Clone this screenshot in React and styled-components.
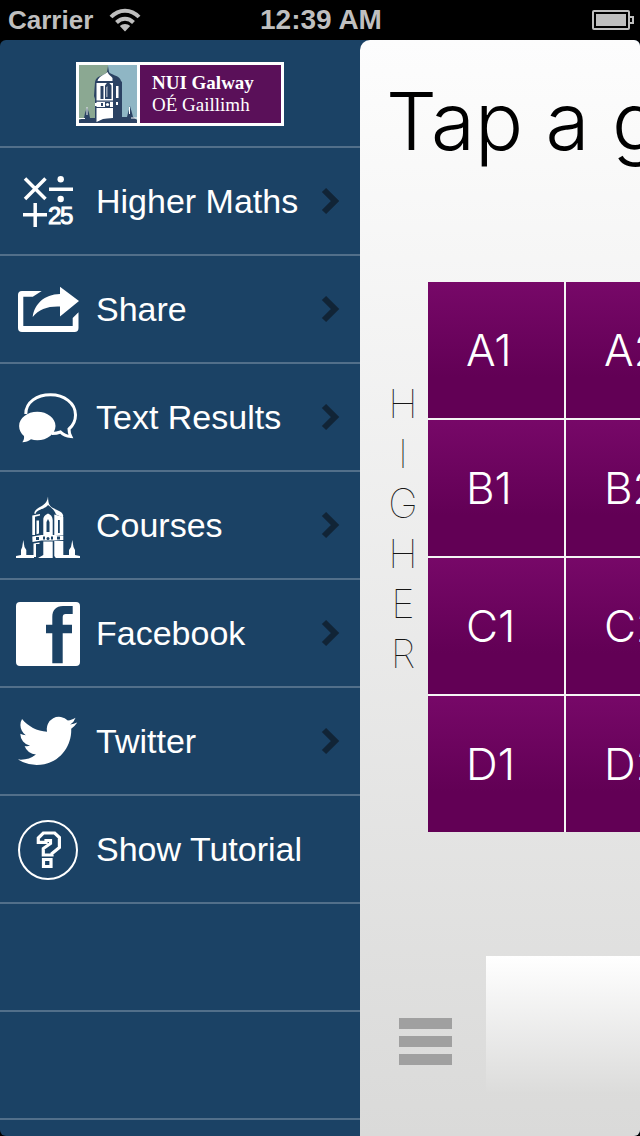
import styled, { createGlobalStyle } from "styled-components"

const grades = ["A1", "A2", "B1", "B2", "C1", "C2", "D1", "D2"]

const App = () => (
  <>
    <GlobalStyle />
    <Screen>
      <StatusBar>
        <Signal>
          Carrier
          <WifiIcon />
        </Signal>
        <Clock>12:39 AM</Clock>
        <BatteryIcon />
      </StatusBar>
      <Body>
        <Sidebar>
          <Header>
            <Logo href="#home">
              <Crest />
              <LogoText>
                <strong>NUI Galway</strong>
                <span>OÉ Gaillimh</span>
              </LogoText>
            </Logo>
          </Header>
          <Menu>
            {items.map(({ label, icon: Icon, arrow }) => (
              <MenuItem key={label}>
                <MenuLink href="#menu">
                  <Icon />
                  <Label>{label}</Label>
                  {arrow && <Chevron />}
                </MenuLink>
              </MenuItem>
            ))}
            <MenuItem />
            <MenuItem />
          </Menu>
        </Sidebar>
        <Content>
          <Title>Tap a grade</Title>
          <Board>
            <Level>
              {"HIGHER".split("").map((letter, i) => (
                <span key={i}>{letter}</span>
              ))}
            </Level>
            <Grades>
              {grades.map((grade) => (
                <Grade key={grade} type="button">
                  {grade}
                </Grade>
              ))}
            </Grades>
          </Board>
          <Footer>
            <MenuButton type="button" aria-label="Menu">
              <Bar />
              <Bar />
              <Bar />
            </MenuButton>
            <Points />
          </Footer>
        </Content>
      </Body>
    </Screen>
  </>
)

export default App

const WifiIcon = () => (
  <svg width="32" height="24" viewBox="0 0 32 24" fill="none" stroke="#bfbfbf" strokeWidth="4">
    <path d="M2 9C10 0.500 22 0.500 30 9" />
    <path d="M7.500 14.500C12.500 9.500 19.500 9.500 24.500 14.500" />
    <path d="M16 23.500L10.800 18C13.500 15.300 18.500 15.300 21.200 18Z" fill="#bfbfbf" stroke="none" />
  </svg>
)

const BatteryIcon = () => (
  <svg width="42" height="20" viewBox="0 0 42 20" fill="none" stroke="#bfbfbf" strokeWidth="2">
    <rect x="1" y="1" width="36" height="18" rx="1" />
    <rect x="4" y="4" width="30" height="12" fill="#bfbfbf" stroke="none" />
    <path d="M38 7h3v6h-3" />
  </svg>
)

const Crest = () => (
  <svg width="58" height="58" viewBox="0 0 58 58">
    <path fill="#8ba892" d="M0 0h29v58H0z" />
    <path fill="#8fb6c4" d="M29 0h29v58H29z" />
    <path
      fill="#2b4263"
      d="M29 1l1 6c1 3 11 3 12 9l1 1v35h5l1-4 2-7 2 7 1 4 4 3v3H0v-3l5-2 1-5 2-6 2 6 1 5h5V34l-1-3 1-14c1-7 10-6 12-10z"
    />
    <g fill="#fff">
      <path d="M18.500 16c1-5 7-6 10-9 1 3 4 4 5 6v3z" />
      <path d="M17.500 18H34v35l-6 .5-4 .5-6.500 3V41H16v-3h1.500z" />
      <path d="M37 21h2.500v12H37zM37 37h2v3h-2zM7.500 42h1v8h-1zM50 42h1v7h-1zM0 53h6v1H0zM52 52.500h6v1h-6z" />
    </g>
    <g fill="#2b4263">
      <path d="M21.500 21h3v13h-3zM26 34V20.500l3-4 3.500 4V34zM17 35.500h17v1.200H17zM16 42h18v1H16zM22 38h2v3h-2zM26 37h5v5h-5z" />
    </g>
    <path fill="#fff" d="M27.500 32V22.500l.8-1.500v11z" />
    <circle cx="28.500" cy="39.500" r="1.600" fill="#fff" />
  </svg>
)

const MathsIcon = () => (
  <Glyph stroke="#fff" strokeWidth="3.500">
    <path d="M9 8.500l20.500 20.500M29.500 8.500L9 29M33 19.300h24M7 44.700h24M19.200 33v24" fill="none" />
    <g stroke="none">
      <circle cx="44.700" cy="9.300" r="3.200" />
      <circle cx="44.700" cy="29" r="3.200" />
    </g>
    <text x="32 44" y="54" fontSize="24" strokeWidth="1">
      25
    </text>
  </Glyph>
)

const ShareIcon = () => (
  <Glyph>
    <path d="M25.700 13H6a4 4 0 0 0-4 4v33a4 4 0 0 0 4 4h52.500a4 4 0 0 0 4-4V34.300L56.700 40v8H7.300V18.700h9.500z" />
    <path d="M44 8.700L63 23 44 38.500V28.500C32 28 23 31 16.700 39 18.500 26 28 16.500 44 16z" />
  </Glyph>
)

const ChatIcon = () => (
  <Glyph>
    <path
      d="M9.800 28C9.800 16 21 8.800 34.500 8.800S59.500 17 59.500 29c0 6-3 11-6.500 14 0 3 .5 5 1.800 7.500-5-.3-8-2-10.300-4.500-2.500 1-5 1.500-8.500 1.500"
      fill="none"
      stroke="#fff"
      strokeWidth="3"
    />
    <path d="M21.300 25.700c10 0 18.200 6.400 18.200 14.200S31.300 54.200 21.300 54.200c-2.300 0-4.500-.3-6.300-.9-2.500 2-5.300 3-8.700 3 1.500-2 2-4 1.700-6.300C5 47.400 3.100 44 3.100 39.900c0-7.800 8.200-14.200 18.200-14.200z" />
  </Glyph>
)

const TowerIcon = () => (
  <Glyph>
    <path d="M32 2.500c.3 8 1.500 9.500 5 11.500 5 2.500 9 3.500 10.200 7.200l-.2 2.300-7-3c-1.500-4.500-5-7-8-9.500-2 4-11 4-12.500 9l-1.300-.5C19 12 31 14 32 2.500z" />
    <path d="M16.300 21.500L24 20v1.500l-5 1.200V41h-2.700zM20.500 26.500h2.500v13l-2.500.7z" />
    <path
      fillRule="evenodd"
      d="M27.300 41.500V26c0-4 2.500-5.500 4.700-6.500 2.500 1 4.700 3 4.700 6.500v15.500zM30.500 38h3V28l-1.500-3-1.500 3zM38.300 20.500l9 2.500v18.500l-9-.5zM42 26v13h1.800V26z"
    />
    <path
      fillRule="evenodd"
      d="M16.300 42.500l9-1.500h14l8 1v4l-9 .5H25.500l-9 1.500zM20 43v3h3v-3zM27 42.500v3h2v-3zM35 42.500v3h2v-3zM41 42.500v3h3v-3z"
    />
    <circle cx="32" cy="44.500" r="1.500" fill="#1b4265" />
    <path d="M17.500 49.500l6-1v1.500h-3.500v13h-2.500zM27.300 47.500h9.400V64H22l5.300-3zM38.300 47h9v17h-7.500l-1.500-2z" />
    <path d="M7.300 46l1.200 7 1.800 3v5H18v3H0v-2l5-1v-5l1.200-3zM56.300 46l1.200 7 1.500 3v5l5 1v2H46v-3h7v-5l2-3z" />
  </Glyph>
)

const FacebookIcon = () => (
  <Glyph>
    <path
      fillRule="evenodd"
      d="M4 0h56a4 4 0 0 1 4 4v56a4 4 0 0 1-4 4H4a4 4 0 0 1-4-4V4a4 4 0 0 1 4-4zM36.300 61.300h10.400V31.300H56V22.700h-9.300V15c0-2 1-3 3-3h7V4H47c-7 0-10.700 4-10.700 11v7.700H30v8.600h6.300z"
    />
  </Glyph>
)

const TwitterIcon = () => (
  <Glyph>
    <path
      transform="translate(2 1.200) scale(2.470)"
      d="M23.953 4.57a10 10 0 01-2.825.775 4.958 4.958 0 002.163-2.723c-.951.555-2.005.959-3.127 1.184a4.92 4.92 0 00-8.384 4.482C7.69 8.095 4.067 6.13 1.64 3.162a4.822 4.822 0 00-.666 2.475c0 1.71.87 3.213 2.188 4.096a4.904 4.904 0 01-2.228-.616v.06a4.923 4.923 0 003.946 4.827 4.996 4.996 0 01-2.212.085 4.936 4.936 0 004.604 3.417 9.867 9.867 0 01-6.102 2.105c-.39 0-.779-.023-1.17-.067a13.995 13.995 0 007.557 2.209c9.053 0 13.998-7.496 13.998-13.985 0-.21 0-.42-.015-.63A9.935 9.935 0 0024 4.59z"
    />
  </Glyph>
)

const HelpIcon = () => (
  <Glyph>
    <g fill="none" stroke="#fff" strokeWidth="3.200">
      <circle cx="32" cy="32" r="29" strokeWidth="2" />
      <path d="M22.300 24.300V20l5-5h11.400l4.700 4.500V29.500l-7.400 6V37H27.300V30.500l7.200-5V22.500H30v1.800z" />
      <path d="M27.500 41.500h7.500v7h-7.500z" />
    </g>
  </Glyph>
)

const Chevron = () => (
  <svg width="20" height="30" viewBox="0 0 20 30" fill="none" stroke="#112436" strokeWidth="6">
    <path d="M4 3l11 11L4 25" />
  </svg>
)

const items = [
  { label: "Higher Maths", icon: MathsIcon, arrow: true },
  { label: "Share", icon: ShareIcon, arrow: true },
  { label: "Text Results", icon: ChatIcon, arrow: true },
  { label: "Courses", icon: TowerIcon, arrow: true },
  { label: "Facebook", icon: FacebookIcon, arrow: true },
  { label: "Twitter", icon: TwitterIcon, arrow: true },
  { label: "Show Tutorial", icon: HelpIcon, arrow: false },
]

const GlobalStyle = createGlobalStyle`
  * {
    box-sizing: border-box;
  }
  body {
    margin: 0;
    background: #000;
    font-family: "Liberation Sans", Arial, sans-serif;
  }
`
const Screen = styled.div`
  display: flex;
  flex-direction: column;
  min-height: 100vh;
`
const StatusBar = styled.header`
  display: grid;
  grid-template-columns: 1fr auto 1fr;
  align-items: center;
  height: 40px;
  padding: 0 6px 0 8px;
  color: #bfbfbf;
  font-size: 26px;
  font-weight: bold;

  & > :last-child {
    justify-self: end;
  }
`
const Signal = styled.div`
  display: flex;
  align-items: center;
  gap: 16px;
`
const Clock = styled.time`
  font-size: 28px;
`
const Body = styled.div`
  display: flex;
  flex: 1;
  overflow: hidden;
  border-radius: 6px;
  background: #1b4265;
`
const Sidebar = styled.nav`
  flex: 0 0 360px;
`
const Header = styled.div`
  display: flex;
  align-items: center;
  justify-content: center;
  height: 108px;
  padding-top: 2px;
  border-bottom: 2px solid #526f8a;
`
const Logo = styled.a`
  display: flex;
  gap: 3px;
  width: 208px;
  padding: 3px;
  background: #fff;
  color: #fff;
  text-decoration: none;
`
const LogoText = styled.span`
  display: flex;
  flex: 1;
  flex-direction: column;
  justify-content: center;
  padding-left: 12px;
  background: #5a1059;
  font-family: "Liberation Serif", "Times New Roman", serif;
  font-size: 19px;
  line-height: 22px;
`
const Menu = styled.ul`
  margin: 0;
  padding: 0;
  list-style: none;
`
const MenuItem = styled.li`
  height: 108px;
  border-bottom: 2px solid #526f8a;
`
const MenuLink = styled.a`
  display: flex;
  align-items: center;
  gap: 16px;
  height: 100%;
  padding: 2px 20px 0 16px;
  color: #fff;
  font-size: 34px;
  text-decoration: none;
`
const Glyph = styled.svg.attrs({ width: 64, height: 64, viewBox: "0 0 64 64" })`
  flex: none;
  fill: #fff;
`
const Label = styled.span`
  flex: 1;
  padding-bottom: 2px;
  white-space: nowrap;
`
const Content = styled.main`
  display: flex;
  flex: 1;
  flex-direction: column;
  min-width: 0;
  overflow: hidden;
  border-radius: 10px 0 0 0;
  background: linear-gradient(#fdfdfd, #dadad9);
`
const Title = styled.h1`
  margin: 0;
  padding: 31px 0 111px 26px;
  font-family: Inter, Roboto, sans-serif;
  font-size: 80px;
  font-weight: 300;
  line-height: 100px;
  white-space: nowrap;
`
const Board = styled.section`
  display: flex;
  align-items: center;
`
const Level = styled.div`
  display: flex;
  flex: 0 0 68px;
  flex-direction: column;
  align-items: center;
  padding: 0 0 56px 18px;
  color: #000;
  font-family: Inter, Roboto, sans-serif;
  font-size: 40px;
  font-weight: 100;
  line-height: 50px;
  opacity: 0.9;
`
const Grades = styled.div`
  display: grid;
  grid-template-columns: repeat(2, 136px);
  gap: 2px;
  background: #f5f5f5;
`
const Grade = styled.button`
  height: 136px;
  padding: 0 0 0 38px;
  border: none;
  background: linear-gradient(#770868, #620055 70%);
  color: #fff;
  font-family: Inter, Roboto, sans-serif;
  font-size: 44px;
  font-weight: 300;
  text-align: left;
`
const Footer = styled.footer`
  display: flex;
  align-items: center;
  gap: 34px;
  margin-top: auto;
  padding: 0 0 44px 39px;
`
const MenuButton = styled.button`
  display: flex;
  flex-direction: column;
  gap: 7px;
  padding: 34px 0 0;
  border: none;
  background: none;
`
const Bar = styled.span`
  width: 53px;
  height: 11px;
  background: #a0a0a0;
`
const Points = styled.div`
  flex: 1;
  height: 136px;
  background: linear-gradient(#fff, #dcdcdb);
`
